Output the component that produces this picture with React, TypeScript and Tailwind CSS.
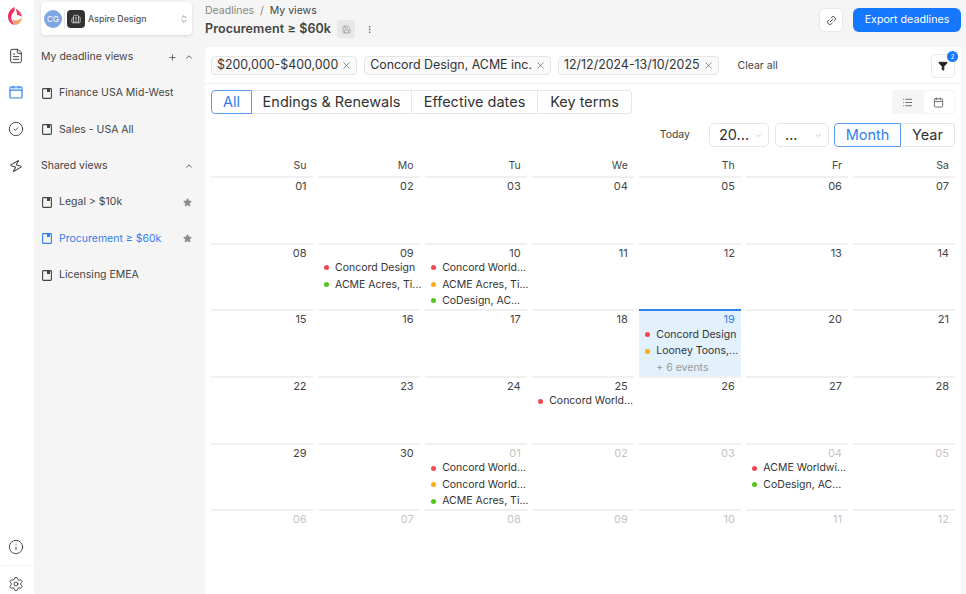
import React from "react";
import { ChevronDown, ChevronUp, ChevronsUpDown, Plus, Link2, List, Calendar, FileText, CircleCheck, Zap, Info, Settings, EllipsisVertical, Save, X, Star, Building2, Funnel } from "lucide-react";

const font = { fontFamily: "Inter, 'Liberation Sans', sans-serif" };

function ViewIcon({ active }: { active?: boolean }) {
  const c = active ? "#2f80ed" : "#444";
  return (
    <svg width="10" height="11" viewBox="0 0 10 11" className="shrink-0">
      <rect x="0.6" y="0.6" width="8.8" height="9.8" rx="0.8" fill="none" stroke={c} strokeWidth="1.1" />
      <rect x="5" y="0.6" width="3" height="3.4" fill={c} />
    </svg>
  );
}

function Logo() {
  return (
    <svg width="14" height="18" viewBox="0 0 15 18" preserveAspectRatio="none">
      <path d="M7 0C3 2 0 5 0 9.500c0 4.700 3.300 8.100 7.500 8.500 -1.300-.9-2.300-2.200-2.700-3.700C3.600 13 3.300 11.400 3.600 9.800 4 7.500 5.300 5.500 7 4Z" fill="#f0305f" />
      <path d="M8 1.500c3.500 1.800 6.800 4.800 7 8.500 -1.500-1.300-3.300-2-5.400-2C9.800 6 9 3.500 8 1.500Z" fill="#ee3a68" />
      <path d="M15 10.500c-.3 4-3.500 7-7 7.500 -1.600-1.300-2.700-3.300-2.800-5.200 3.200 1.300 7.200.6 9.800-2.300Z" fill="#f8a062" />
    </svg>
  );
}

function CalendarGlyph() {
  return (
    <svg width="14" height="14" viewBox="0 0 14 14" fill="none" stroke="#2f80ed" strokeWidth="1.2">
      <rect x="1" y="2.200" width="12" height="10.800" rx="0.8" />
      <path d="M1 5h12" strokeWidth="1.500" />
      <rect x="1.500" y="2.700" width="11" height="1.800" fill="#cfe3fb" stroke="none" />
      <path d="M4 0.800v2.400M10 0.800v2.400" />
    </svg>
  );
}

function SideItem({ label, active, star }: { label: string; active?: boolean; star?: boolean }) {
  return (
    <div className="h-[36.500px] flex items-center pl-[8px] pr-[13px] gap-[7px]">
      <ViewIcon active={active} />
      <span className={`text-[10.500px] flex-1 ${active ? "text-[#2f80ed]" : "text-[#444]"}`}>{label}</span>
      {star && <Star size={9} fill="#8c8c8c" stroke="#8c8c8c" />}
    </div>
  );
}

function Chip({ label }: { label: string }) {
  return (
    <div className="h-[19px] border border-[#e6e6e6] rounded-[4px] bg-[#fafafa] flex items-center pl-[5px] pr-[4px] gap-[3px] text-[12.400px] text-[#333]">
      <span>{label}</span>
      <X size={11} strokeWidth={1.400} className="text-[#555]" />
    </div>
  );
}

type Ev = [string, string];
type Cell = { d: string; muted?: boolean; today?: boolean; ev?: Ev[]; more?: string };

const R = "#f5474f", O = "#faad14", G = "#52c41a";

const weeks: Cell[][] = [
  [{ d: "01" }, { d: "02" }, { d: "03" }, { d: "04" }, { d: "05" }, { d: "06" }, { d: "07" }],
  [
    { d: "08" },
    { d: "09", ev: [[R, "Concord Design"], [G, "ACME Acres, Ti..."]] },
    { d: "10", ev: [[R, "Concord World..."], [O, "ACME Acres, Ti..."], [G, "CoDesign, AC..."]] },
    { d: "11" }, { d: "12" }, { d: "13" }, { d: "14" },
  ],
  [
    { d: "15" }, { d: "16" }, { d: "17" }, { d: "18" },
    { d: "19", today: true, ev: [[R, "Concord Design"], [O, "Looney Toons,..."]], more: "+ 6 events" },
    { d: "20" }, { d: "21" },
  ],
  [
    { d: "22" }, { d: "23" }, { d: "24" },
    { d: "25", ev: [[R, "Concord World..."]] },
    { d: "26" }, { d: "27" }, { d: "28" },
  ],
  [
    { d: "29" }, { d: "30" },
    { d: "01", muted: true, ev: [[R, "Concord World..."], [O, "Concord World..."], [G, "ACME Acres, Ti..."]] },
    { d: "02", muted: true }, { d: "03", muted: true },
    { d: "04", muted: true, ev: [[R, "ACME Worldwi..."], [G, "CoDesign, AC..."]] },
    { d: "05", muted: true },
  ],
  ["06", "07", "08", "09", "10", "11", "12"].map((d) => ({ d, muted: true })),
];

function DayCell({ c }: { c: Cell }) {
  return (
    <div className={`h-[66.700px] border-t-2 ${c.today ? "border-[#2f80ed] bg-[#e3f1fd]" : "border-[#f0f0f0]"}`}>
      <div className={`text-right pr-[6px] pt-[1px] h-[15px] text-[11px] leading-[14px] ${c.today ? "text-[#2f80ed]" : c.muted ? "text-[#c4c4c4]" : "text-[#444]"}`}>{c.d}</div>
      <div className="flex flex-col">
        {(c.ev ?? []).map(([col, t], i) => (
          <div key={i} className="h-[16.500px] flex items-center pl-[6px] whitespace-nowrap text-[10.500px] text-[#333]">
            <span className="w-[5px] h-[5px] rounded-full shrink-0 mr-[6px]" style={{ backgroundColor: col }} />
            <span>{t}</span>
          </div>
        ))}
        {c.more && <div className="pl-[17px] mt-[1px] h-[16px] text-[10.500px] leading-[16px] text-[#999]">{c.more}</div>}
      </div>
    </div>
  );
}

export default function App() {
  return (
    <div className="w-[966px] h-[594px] overflow-hidden flex bg-[#f5f5f5]" style={font}>
      <aside className="w-[34px] shrink-0 bg-white flex flex-col items-center text-[#333]">
        <div className="w-full flex flex-col items-center pr-[2px] h-full">
          <div className="mt-[7px] h-[18px] -translate-x-[1px]"><Logo /></div>
          <FileText size={16} strokeWidth={1.400} className="mt-[23px]" />
          <div className="mt-[21px] h-[14px]"><CalendarGlyph /></div>
          <CircleCheck size={16} strokeWidth={1.300} className="mt-[22px]" />
          <Zap size={14} strokeWidth={1.600} className="mt-[22px] rotate-[15deg]" />
          <Info size={16} strokeWidth={1.300} className="mt-auto mb-[10px]" />
          <div className="w-full border-t border-[#f2f2f2] mr-[-2px]" />
          <Settings size={16} strokeWidth={1.300} className="mt-[10px] mb-[2px]" />
        </div>
      </aside>

      <nav className="w-[171px] shrink-0 flex flex-col">
        <div className="ml-[7px] mr-[13px] mt-[2px] h-[33px] bg-white rounded-[4px] shadow-[0_1px_3px_rgba(0,0,0,0.12)] flex items-center pl-[3px] pr-[3px]">
          <div className="w-[18px] h-[18px] rounded-full bg-[#7fa6e4] text-white text-[8px] flex items-center justify-center">CG</div>
          <div className="w-px h-[18px] bg-[#e5e5e5] mx-[2px]" />
          <div className="w-[18px] h-[18px] rounded-[4px] bg-[#333] flex items-center justify-center"><Building2 size={10} className="text-[#ccc]" /></div>
          <span className="ml-[3px] text-[8.800px] text-[#555] font-medium flex-1">Aspire Design</span>
          <ChevronsUpDown size={10} strokeWidth={1.500} className="text-[#555]" />
        </div>
        <div className="h-[42px] mt-[1px] flex items-center pl-[7px] pr-[11px] text-[10.500px] text-[#444]">
          <span className="flex-1">My deadline views</span>
          <Plus size={9} className="mr-[7px]" />
          <ChevronUp size={10} />
        </div>
        <div className="mt-[-3px]">
          <SideItem label="Finance USA Mid-West" />
          <SideItem label="Sales - USA All" />
        </div>
        <div className="h-[36px] flex items-center pl-[7px] pr-[11px] text-[10.500px] text-[#444]">
          <span className="flex-1">Shared views</span>
          <ChevronUp size={10} />
        </div>
        <SideItem label="Legal > $10k" star />
        <SideItem label="Procurement ≥ $60k" active star />
        <SideItem label="Licensing EMEA" />
      </nav>

      <main className="flex-1 min-w-0 flex flex-col">
        <header className="h-[47px] shrink-0 flex items-start justify-between pr-[5px]">
          <div>
            <div className="text-[10.500px] leading-[14px] mt-[4px] text-[#888]">Deadlines <span className="mx-[3px]">/</span> <span className="text-[#444]">My views</span></div>
            <div className="flex items-center mt-[2px]">
              <span className="text-[12.500px] font-semibold text-[#444] tracking-[0.1px]">Procurement ≥ $60k</span>
              <span className="ml-[6px] w-[18px] h-[18px] rounded-[3px] bg-[#e8e8e8] flex items-center justify-center"><Save size={9} className="text-[#999]" /></span>
              <EllipsisVertical size={9} className="ml-[10px] text-[#555]" />
            </div>
          </div>
          <div className="flex items-center mt-[8px] gap-[10px]">
            <span className="w-[24px] h-[24px] bg-white border border-[#e8e8e8] rounded-[5px] flex items-center justify-center"><Link2 size={11} className="text-[#444] -rotate-45" /></span>
            <span className="w-[108px] h-[24px] bg-[#1677ff] rounded-[6px] text-white text-[10.700px] flex items-center justify-center">Export deadlines</span>
          </div>
        </header>

        <section className="flex-1 bg-white rounded-t-[4px] mr-[5px] flex flex-col min-h-0">
          <div className="h-[37px] shrink-0 border-b border-[#f0f0f0] flex items-center pl-[6px] pr-[6px] gap-[7px] pt-[1px]">
            <Chip label="$200,000-$400,000" />
            <Chip label="Concord Design, ACME inc." />
            <Chip label="12/12/2024-13/10/2025" />
            <span className="ml-[12px] text-[10.500px] text-[#444]">Clear all</span>
            <span className="ml-auto relative w-[24px] h-[24px] bg-white border border-[#e8e8e8] rounded-[5px] flex items-center justify-center">
              <Funnel size={10} fill="#222" className="text-[#222]" />
              <span className="absolute -top-[4px] -right-[4px] w-[11px] h-[11px] rounded-full bg-[#1677ff] text-white text-[6px] flex items-center justify-center">2</span>
            </span>
          </div>

          <div className="h-[37px] shrink-0 flex items-start justify-between pl-[6px] pr-[6px] pt-[6px]">
            <div className="flex h-[24px] text-[14.500px] text-[#333]">
              <span className="w-[41px] border border-[#5a9cf0] rounded-l-[4px] text-[#2f80ed] flex items-center justify-center">All</span>
              <span className="w-[160px] border-y border-r border-[#e6e6e6] flex items-center justify-center">Endings &amp; Renewals</span>
              <span className="w-[126px] border-y border-r border-[#e6e6e6] flex items-center justify-center">Effective dates</span>
              <span className="w-[94px] border-y border-r border-[#e6e6e6] rounded-r-[4px] flex items-center justify-center">Key terms</span>
            </div>
            <div className="w-[63px] h-[24px] bg-[#f5f5f5] rounded-[4px] flex">
              <span className="flex-1 flex items-center justify-center"><List size={11} className="text-[#666]" /></span>
              <span className="flex-1 bg-white rounded-[4px] m-[1px] flex items-center justify-center"><Calendar size={11} className="text-[#666]" /></span>
            </div>
          </div>

          <div className="h-[24px] shrink-0 mt-[2px] flex items-center justify-end pr-[6px]">
            <span className="text-[10.500px] text-[#444] mr-[19px]">Today</span>
            <span className="w-[60px] h-[24px] border border-[#e6e6e6] rounded-[5px] flex items-center pl-[9px] text-[14.500px] text-[#333]">
              <span className="flex-1">20...</span><ChevronDown size={9} className="text-[#bbb] mr-[5px]" />
            </span>
            <span className="w-[54px] ml-[6px] h-[24px] border border-[#e6e6e6] rounded-[5px] flex items-center pl-[9px] text-[14.500px] text-[#333]">
              <span className="flex-1">...</span><ChevronDown size={9} className="text-[#bbb] mr-[5px]" />
            </span>
            <span className="w-[67px] ml-[5px] h-[24px] border border-[#5a9cf0] rounded-l-[4px] text-[14.500px] text-[#2f80ed] flex items-center justify-center">Month</span>
            <span className="w-[54px] h-[24px] border-y border-r border-[#e6e6e6] rounded-r-[4px] text-[14.500px] text-[#333] flex items-center justify-center">Year</span>
          </div>

          <div className="pl-[6px] pr-[6px] mt-[6px] grid grid-cols-7 gap-x-[5.500px]">
            {["Su", "Mo", "Tu", "We", "Th", "Fr", "Sa"].map((d) => (
              <div key={d} className="h-[23px] text-right pr-[6px] text-[10.500px] leading-[26px] text-[#444]">{d}</div>
            ))}
            {weeks.flat().map((c, i) => <DayCell key={i} c={c} />)}
          </div>
        </section>
      </main>
    </div>
  );
}
